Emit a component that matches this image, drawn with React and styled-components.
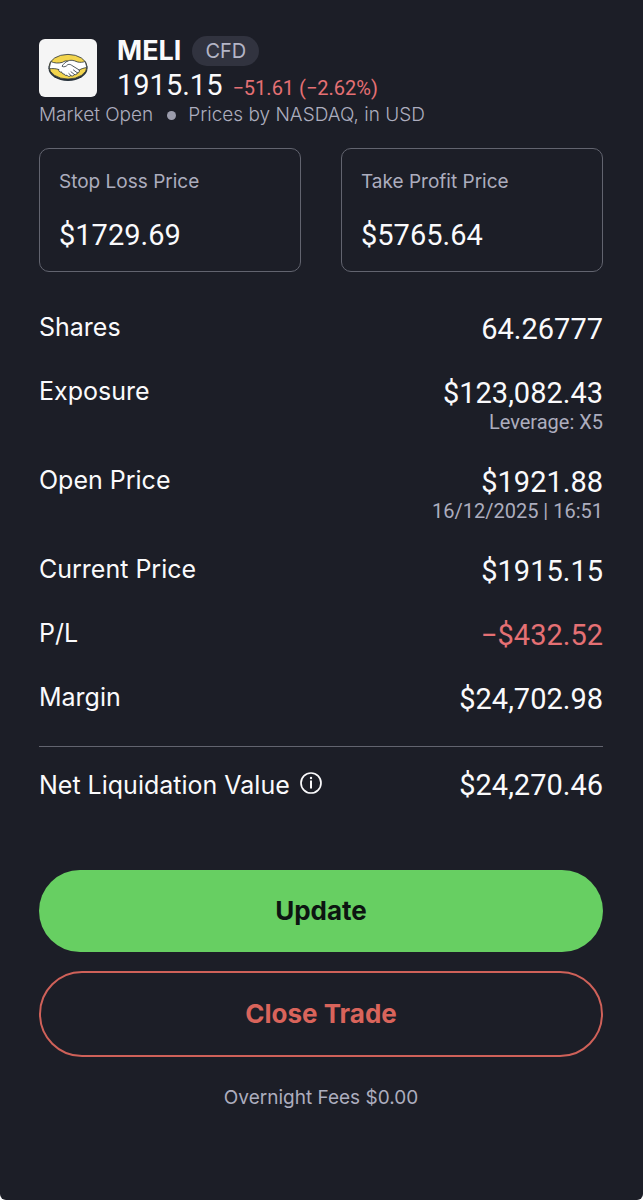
import React from "react";
import styled, { createGlobalStyle } from "styled-components";

const ui = `Inter, "Liberation Sans", sans-serif`;
const num = `Roboto, "Liberation Sans", sans-serif`;

const GlobalStyle = createGlobalStyle`
  *, *::before, *::after { box-sizing: border-box; }
  body { margin: 0; background: #fff; font-family: ${ui}; }
`;

const Screen = styled.main`
  min-height: 100vh;
  padding: 36px 40px 40px 39px;
  border-radius: 0 0 6px 6px;
  background: #1c1e27;
  color: #fafafc;
`;

const Header = styled.header`
  display: grid;
  grid-template-columns: 58px 1fr;
  column-gap: 20px;
`;

const Logo = styled.svg`
  width: 58px;
  height: 58px;
  margin-top: 3px;
  border-radius: 6px;
  background: #f5f5f5;
`;

const TitleLine = styled.div`
  display: flex;
  align-items: center;
  gap: 11px;
`;

const Symbol = styled.h1`
  margin: 0;
  font-size: 27px;
  line-height: 30px;
  font-weight: 700;
`;

const Tag = styled.span`
  padding: 0 13px;
  border-radius: 15px;
  background: #31333f;
  color: #b4b5c6;
  font-size: 20px;
  line-height: 30px;
`;

const PriceLine = styled.div`
  display: flex;
  align-items: baseline;
  gap: 10px;
  margin-top: 2px;
  font-family: ${num};
`;

const Price = styled.span`
  font-size: 29px;
  line-height: 34px;
  font-weight: 400;
`;

const Change = styled.span`
  color: #e57074;
  font-size: 20px;
  line-height: 24px;
  font-weight: 400;
`;

const Market = styled.p`
  display: flex;
  align-items: center;
  margin: 0;
  color: #acadbe;
  font-size: 19px;
  line-height: 26px;
  font-weight: 300;
`;

const Dot = styled.span`
  width: 9px;
  height: 9px;
  margin: 0 12px 0 14px;
  border-radius: 50%;
  background: #9b9cac;
`;

const Limits = styled.div`
  display: grid;
  grid-template-columns: 1fr 1fr;
  gap: 40px;
  margin-top: 20px;
`;

const LimitBox = styled.label`
  display: flex;
  flex-direction: column;
  gap: 21px;
  padding: 21px 19px 16px;
  border: 1px solid #62646f;
  border-radius: 10px;
  color: #acadbe;
  font-size: 19px;
  line-height: 24px;
  font-weight: 400;
`;

const LimitInput = styled.input`
  width: 100%;
  height: 40px;
  padding: 0;
  border: 0;
  outline: 0;
  background: transparent;
  color: #fafafc;
  font: 400 29px/40px ${num};
`;

const Details = styled.dl`
  display: flex;
  flex-direction: column;
  gap: 30px;
  margin: 0;
  padding: 40px 0 30px;
  border-bottom: 1px solid #62646f;
`;

const Row = styled.div`
  display: flex;
  justify-content: space-between;
  align-items: flex-start;
`;

const Label = styled.dt`
  display: flex;
  align-items: center;
  gap: 9px;
  font-size: 25px;
  line-height: 30px;
  font-weight: 400;
`;

const Value = styled.dd`
  margin: 0;
  color: ${(p) => (p.$loss ? "#e57074" : "#fafafc")};
  font-family: ${num};
  font-size: 29px;
  line-height: 34px;
  font-weight: 400;
  text-align: right;
`;

const Note = styled.small`
  display: block;
  color: #acadbe;
  font-size: 20px;
  line-height: 25px;
`;

const Total = styled.dl`
  margin: 0;
  padding: 21px 0 68px;

  ${Row} { align-items: center; }
`;

const InfoButton = styled.button`
  display: flex;
  padding: 0 0 4px;
  border: 0;
  background: none;
  color: inherit;
`;

const Actions = styled.div`
  display: flex;
  flex-direction: column;
  gap: 19px;
`;

const Action = styled.button`
  padding: 25px;
  border: 0;
  border-radius: 43px;
  background: #67cf62;
  color: #0d1511;
  font: 700 26px/32px ${ui};
`;

const CloseAction = styled(Action)`
  border: 2px solid #cf6159;
  background: transparent;
  color: #d9645b;
`;

const Fees = styled.p`
  margin: 29px 0 0;
  color: #acadbe;
  font-size: 19px;
  line-height: 24px;
  font-weight: 400;
  text-align: center;
`;

function HandshakeLogo() {
  return (
    <Logo viewBox="0 0 58 58" role="img" aria-label="MercadoLibre">
      <ellipse cx="29" cy="29.3" rx="19.5" ry="12.6" fill="#26303a" />
      <ellipse cx="29" cy="27.700" rx="19" ry="12.300" fill="#f3d54e" stroke="#26303a" strokeWidth="0.8" />
      <path
        d="M11.800 22.500C15.500 24.300 19.500 24.400 23.300 23.400C25.500 22.200 26.500 21.500 28.500 22.100C31.500 20.600 34.500 21.200 38.300 22.900C41 23.700 44 23.300 46.200 22.500L47.900 28.600C45 28.900 42.500 29.700 40.200 31C40.800 33.200 39.500 34 38.300 33.800C38 35.600 36.500 36 35.400 35.500C34.500 37.200 32.900 37.300 31.900 36.500C30.500 38 28.500 37.500 28 36.200C26.500 36.800 25.300 36 25.200 34.900C23.800 35.200 22.600 34.300 22.900 33.100C20.500 33.400 19.200 31.800 20 30.600C17 29.500 13.500 29.400 10.100 29.800Z"
        fill="#fff"
        stroke="#26303a"
        strokeWidth="0.8"
        strokeLinejoin="round"
      />
      <path
        d="M28.500 22.100C26.200 23.200 24.500 25 23 27.200C25 28.500 27.300 27.500 28.800 25.600C30.300 25.200 31.500 25.400 32.500 26.200L40.200 31M34.500 31L38.300 33.800M32 32.800L35.400 35.500M29.800 34.500L31.900 36.500"
        fill="none"
        stroke="#26303a"
        strokeWidth="0.8"
        strokeLinecap="round"
        strokeLinejoin="round"
      />
    </Logo>
  );
}

function InfoIcon() {
  return (
    <svg width="24" height="24" viewBox="0 0 24 24" fill="none" stroke="currentColor" aria-hidden="true">
      <circle cx="12" cy="12" r="10" strokeWidth="1.7" />
      <path d="M12 9.500V17.500" strokeWidth="2" />
      <circle cx="12" cy="7" r="1.200" fill="currentColor" stroke="none" />
    </svg>
  );
}

const details = [
  { label: "Shares", value: "64.26777" },
  { label: "Exposure", value: "$123,082.43", note: "Leverage: X5" },
  { label: "Open Price", value: "$1921.88", note: "16/12/2025 | 16:51" },
  { label: "Current Price", value: "$1915.15" },
  { label: "P/L", value: "−$432.52", loss: true },
  { label: "Margin", value: "$24,702.98" },
];

function Limit({ id, label, value }) {
  return (
    <LimitBox htmlFor={id}>
      {label}
      <LimitInput id={id} defaultValue={value} />
    </LimitBox>
  );
}

export default function App() {
  return (
    <>
      <GlobalStyle />
      <Screen>
        <Header>
          <HandshakeLogo />
          <div>
            <TitleLine>
              <Symbol>MELI</Symbol>
              <Tag>CFD</Tag>
            </TitleLine>
            <PriceLine>
              <Price>1915.15</Price>
              <Change>−51.61 (−2.62%)</Change>
            </PriceLine>
          </div>
        </Header>
        <Market>
          Market Open
          <Dot />
          Prices by NASDAQ, in USD
        </Market>
        <Limits>
          <Limit id="stop-loss" label="Stop Loss Price" value="$1729.69" />
          <Limit id="take-profit" label="Take Profit Price" value="$5765.64" />
        </Limits>
        <Details>
          {details.map((d) => (
            <Row key={d.label}>
              <Label>{d.label}</Label>
              <Value $loss={d.loss}>
                {d.value}
                {d.note && <Note>{d.note}</Note>}
              </Value>
            </Row>
          ))}
        </Details>
        <Total>
          <Row>
            <Label>
              Net Liquidation Value
              <InfoButton type="button" aria-label="About net liquidation value">
                <InfoIcon />
              </InfoButton>
            </Label>
            <Value>$24,270.46</Value>
          </Row>
        </Total>
        <Actions>
          <Action type="button">Update</Action>
          <CloseAction type="button">Close Trade</CloseAction>
        </Actions>
        <Fees>Overnight Fees $0.00</Fees>
      </Screen>
    </>
  );
}
